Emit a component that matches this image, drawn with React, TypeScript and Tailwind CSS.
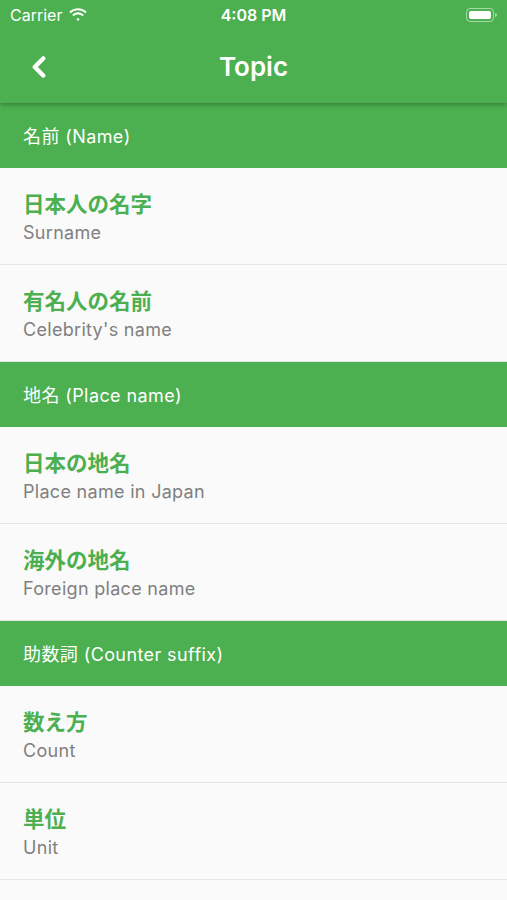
import { ChevronLeft } from "lucide-react";

type topicItem = {
    title: string;
    subtitle: string;
}

type topicSection = {
    header: string;
    items: topicItem[];
}

const sections: topicSection[] = [
    {
        header: "名前 (Name)",
        items: [
            { title: "日本人の名字", subtitle: "Surname" },
            { title: "有名人の名前", subtitle: "Celebrity's name" },
        ],
    },
    {
        header: "地名 (Place name)",
        items: [
            { title: "日本の地名", subtitle: "Place name in Japan" },
            { title: "海外の地名", subtitle: "Foreign place name" },
        ],
    },
    {
        header: "助数詞 (Counter suffix)",
        items: [
            { title: "数え方", subtitle: "Count" },
            { title: "単位", subtitle: "Unit" },
        ],
    },
]

const font = { fontFamily: 'Inter, "Noto Sans CJK JP", sans-serif' }

const StatusBar = () => (
    <div className="h-[30px] flex items-center justify-between px-[10px] text-white relative">
        <div className="flex items-center gap-[6px] text-[16px]">
            <span>Carrier</span>
            <svg width="20" height="14" viewBox="0 0 18 13" fill="white">
                <path d="M9 2.2c2.6 0 5 1 6.8 2.7l1.3-1.4C14.9 1.4 12.1.2 9 .2S3.1 1.4.9 3.5l1.3 1.4C4 3.2 6.4 2.2 9 2.2z" />
                <path d="M9 6c1.6 0 3 .6 4.1 1.6l1.3-1.4C13 4.9 11.1 4 9 4S5 4.9 3.6 6.2l1.3 1.4C6 6.6 7.4 6 9 6z" />
                <path d="M9 9.6c.6 0 1.2.2 1.6.6L9 12 7.4 10.2c.4-.4 1-.6 1.6-.6z" />
            </svg>
        </div>
        <span className="absolute left-1/2 -translate-x-1/2 text-[16px] font-semibold">4:08 PM</span>
        <div className="flex items-center">
            <div className="w-[28px] h-[14px] rounded-[4px] border border-white/50 p-[2px]">
                <div className="w-full h-full bg-white rounded-[2px]"></div>
            </div>
            <div className="w-[2px] h-[4px] bg-white/50 rounded-r ml-[1px]"></div>
        </div>
    </div>
)

const App = () => {
    return (
        <div className="w-[507px] h-[900px] bg-[#fafafa] overflow-hidden" style={font}>
            <div className="bg-[#4caf50] shadow-[0_2px_4px_rgba(0,0,0,0.25)] relative z-10">
                <StatusBar />
                <div className="h-[73px] flex items-center relative">
                    <ChevronLeft className="ml-[22px] text-white" size={34} strokeWidth={3.2} />
                    <span className="absolute left-1/2 -translate-x-1/2 text-white text-[26px] font-semibold">Topic</span>
                </div>
            </div>
            {sections.map((section, sIndex) => (
                <div key={sIndex}>
                    <div className="h-[65px] bg-[#4caf50] flex items-center px-[23px] pt-[2px] text-white text-[18px] tracking-[0.4px]">
                        {section.header}
                    </div>
                    {section.items.map((item, index) => (
                        <div key={index} className="h-[97px] flex flex-col justify-center px-[23px] pt-[3px] border-b border-[#e6e6e6]">
                            <span className="text-[#4caf50] text-[21.5px] font-bold leading-[28px]">{item.title}</span>
                            <span className="text-[#808080] text-[18px] tracking-[0.3px] leading-[27px] mt-[1px]">{item.subtitle}</span>
                        </div>
                    ))}
                </div>
            ))}
        </div>
    )
}

export default App;
